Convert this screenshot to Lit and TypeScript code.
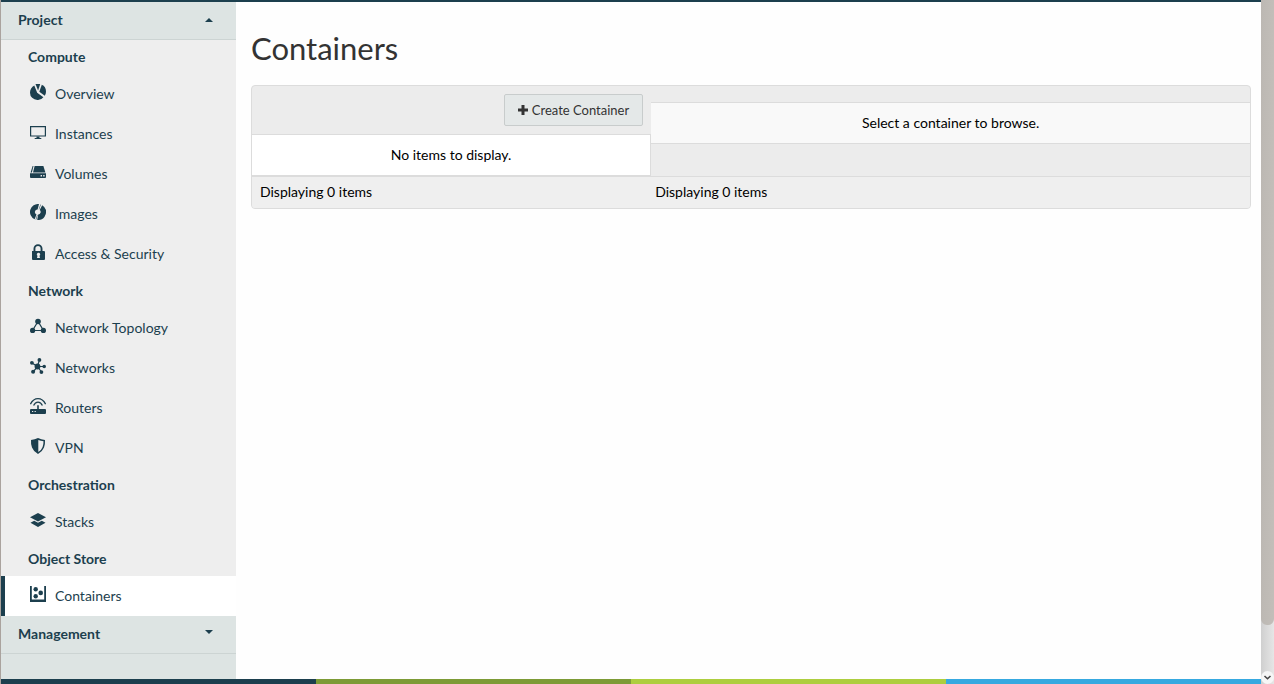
import { LitElement, html, css, svg, SVGTemplateResult } from "lit";
import { customElement, property, state } from "lit/decorators.js";
import { classMap } from "lit/directives/class-map.js";

const ICONS: Record<string, SVGTemplateResult> = {
  overview: svg`
    <path d="M4.300 1.600 7.200 8.800l6.200 4.400A7.300 7.300 0 0 1 7.300 16 7.300 7.300 0 0 1 0 8.700C0 5.600 1.600 3 4.300 1.600z"/>
    <path d="M5.500 0h4.700L8.100 6.400z"/>
    <path d="M11.800.8C14.500 2 16 4.400 16 7.200c0 1.700-.4 3.200-1.200 4.500L9.300 7.800z"/>`,
  instances: svg`
    <path fill-rule="evenodd" d="M0 2h16v10.600H0zM1.200 3.200v8.200h13.600V3.200z"/>
    <path d="M6.500 12.600h3v1.400h1.800v1H4.700v-1h1.800z"/>`,
  volumes: svg`
    <path d="M2.600 2h.9L1.900 8.600H.6z"/>
    <path d="M4.600 2h8.800l2 6.600H3z"/>
    <path fill-rule="evenodd" d="M0 9.300h16v3.800q0 .9-.9.900H.9Q0 14 0 13.100zM10.600 11v1.400H12V11zM13.200 11v1.400h1.400V11z"/>`,
  images: svg`
    <path d="M9 .06A8 8 0 0 0 4.600 15.240L6.500 10.400A2.600 2.600 0 0 1 7.600 5.400z"/>
    <path d="M12.200 1.190A8 8 0 0 1 7.200 15.960L8.200 10.600A2.600 2.600 0 0 0 9.700 6z"/>
    <path d="M10.500.4l.5.200-2 4.800-.3-.1zM6.100 15.700l-.5-.2 1.700-4.700.3.100z"/>`,
  lock: svg`
    <path fill-rule="evenodd" d="M2 7h1.500V4.700a4.500 4.500 0 0 1 9 0V7H14a1 1 0 0 1 1 1v7a1 1 0 0 1-1 1H3a1 1 0 0 1-1-1zM5.400 7h5.200V4.700a2.600 2.600 0 0 0-5.200 0zM8.500 8.800a1.600 1.600 0 0 0-1 2.900l-.5 2.300h3l-.5-2.300a1.600 1.600 0 0 0-1-2.900z"/>`,
  topology: svg`
    <path d="M8 3.500 2.500 12.500h11z" fill="none" stroke="currentColor" stroke-width="1.200"/>
    <circle cx="8" cy="3.500" r="2.800"/><circle cx="2.600" cy="12.400" r="2.600"/><circle cx="13.400" cy="12.400" r="2.600"/>`,
  networks: svg`
    <path d="M7.500 8.500 9.400 2M7.500 8.500 2 5M7.500 8.500h6.700M7.500 8.500l-4.300 5.300M7.500 8.500l4 5.500" fill="none" stroke="currentColor" stroke-width="1.200"/>
    <circle cx="7.500" cy="8.500" r="2.900"/><circle cx="9.400" cy="1.900" r="1.900"/><circle cx="1.900" cy="4.800" r="1.900"/>
    <circle cx="14.200" cy="8.500" r="1.800"/><circle cx="3.100" cy="13.800" r="2"/><circle cx="11.400" cy="14.100" r="1.900"/>`,
  routers: svg`
    <path d="M.4 6.200C2.200 2.600 4.800.7 8 .7s5.800 1.900 7.600 5.500M3.600 7.600C4.700 5.200 6.100 4.200 8 4.200s3.300 1 4.400 3.400" fill="none" stroke="currentColor" stroke-width="1.300"/>
    <path d="M7.200 7.200h1.600v3.900H7.200z"/>
    <path fill-rule="evenodd" d="M1 11h14q1 0 1 1v3q0 1-1 1H1q-1 0-1-1v-3q0-1 1-1zM2 13v1h1.200v-1zM4.600 13v1h1.200v-1z"/>`,
  vpn: svg`
    <path fill-rule="evenodd" d="M8 0q3.200 1.700 7 1.900.3 4.200-1 7.600Q12.300 13.800 8 16 3.700 13.800 2 9.500.7 6.100 1 1.900 4.800 1.700 8 0zM8.300 2v12q3.200-2 4.300-5.100 1-2.700.9-5.700Q10.800 3 8.300 2z"/>`,
  stacks: svg`
    <path d="M8 1l8 4.300-8 4.300-8-4.300z"/>
    <path d="M.5 10.800l3.700-2 3.800 2 3.800-2 3.700 2L8 15z"/>`,
  containers: svg`
    <path d="M0 0h1.800v13.600h12.400V0H16v16H0z"/>
    <circle cx="5.700" cy="3.200" r="2.200"/><circle cx="10.700" cy="6.900" r="2.300"/><circle cx="5.700" cy="10.300" r="2.200"/>`,
};

interface NavGroup {
  title: string;
  items: { icon: string; label: string }[];
}

const GROUPS: NavGroup[] = [
  {
    title: "Compute",
    items: [
      { icon: "overview", label: "Overview" },
      { icon: "instances", label: "Instances" },
      { icon: "volumes", label: "Volumes" },
      { icon: "images", label: "Images" },
      { icon: "lock", label: "Access & Security" },
    ],
  },
  {
    title: "Network",
    items: [
      { icon: "topology", label: "Network Topology" },
      { icon: "networks", label: "Networks" },
      { icon: "routers", label: "Routers" },
      { icon: "vpn", label: "VPN" },
    ],
  },
  { title: "Orchestration", items: [{ icon: "stacks", label: "Stacks" }] },
  { title: "Object Store", items: [{ icon: "containers", label: "Containers" }] },
];

@customElement("side-nav")
class SideNav extends LitElement {
  @property() active = "";
  @state() private open = true;

  static styles = css`
    :host {
      display: flex;
      flex-direction: column;
      background: #dde4e3;
      color: #1c3f4e;
      font-size: 14px;
      line-height: 20px;
    }
    .section {
      display: flex;
      align-items: center;
      justify-content: space-between;
      flex: none;
      height: 38px;
      padding: 0 23px 2px 17px;
      border: 0;
      border-bottom: 1px solid #ccd4d3;
      background: #dde4e3;
      color: inherit;
      font: inherit;
      font-weight: 700;
      text-align: left;
      cursor: pointer;
    }
    .caret {
      width: 8px;
      height: 4px;
      fill: currentColor;
    }
    .caret.down {
      margin-bottom: 4px;
    }
    .groups {
      background: #eeeeee;
    }
    .title {
      margin: 0;
      padding: 7px 27px;
      font-size: 14px;
      font-weight: 700;
    }
    ul {
      margin: 0;
      padding: 0;
      list-style: none;
    }
    .item {
      display: flex;
      align-items: center;
      gap: 9px;
      height: 40px;
      box-sizing: border-box;
      padding: 0 16px 0 25px;
      border-left: 4px solid transparent;
      color: inherit;
      text-decoration: none;
    }
    .item.active {
      background: #fff;
      border-left-color: #1c3f4e;
    }
    .icon {
      width: 16px;
      height: 16px;
      margin-bottom: 4px;
      fill: currentColor;
    }
  `;

  render() {
    return html`
      <button class="section" aria-expanded=${this.open} @click=${() => (this.open = !this.open)}>
        Project
        <svg class="caret" viewBox="0 0 8 4" aria-hidden="true"><path d="M4 0l4 4H0z" /></svg>
      </button>
      ${this.open
        ? html`<nav class="groups" aria-label="Project">
            ${GROUPS.map(
              (g) => html`
                <h2 class="title">${g.title}</h2>
                <ul>
                  ${g.items.map(
                    (i) => html`<li>
                      <a href="#" class=${classMap({ item: true, active: i.label === this.active })}>
                        <svg class="icon" viewBox="0 0 16 16" aria-hidden="true">${ICONS[i.icon]}</svg>
                        <span>${i.label}</span>
                      </a>
                    </li>`
                  )}
                </ul>
              `
            )}
          </nav>`
        : ""}
      <button class="section" aria-expanded="false">
        Management
        <svg class="caret down" viewBox="0 0 8 4" aria-hidden="true"><path d="M0 0h8L4 4z" /></svg>
      </button>
    `;
  }
}

@customElement("container-browser")
class ContainerBrowser extends LitElement {
  static styles = css`
    :host {
      display: block;
      overflow: hidden;
      border: 1px solid #dcdcdc;
      border-radius: 4px;
      background: #ececec;
      color: #000;
      font-size: 14px;
      line-height: 20px;
    }
    .columns {
      display: grid;
      grid-template-columns: 2fr 3fr;
      align-items: start;
    }
    .toolbar {
      display: flex;
      justify-content: flex-end;
      padding: 8px;
    }
    .create {
      display: flex;
      align-items: center;
      gap: 4px;
      height: 32px;
      padding: 0 13px;
      border: 1px solid #c8cccc;
      border-radius: 2px;
      background: #e4e8e8;
      color: #333;
      font: inherit;
      font-size: 13px;
      cursor: pointer;
    }
    .plus {
      width: 10px;
      height: 10px;
      fill: currentColor;
    }
    table {
      width: 100%;
      border-spacing: 0;
    }
    td {
      padding: 10px 8px;
      border: solid #dcdcdc;
      border-width: 1px 0;
      text-align: center;
    }
    .containers td {
      border-right-width: 1px;
      background: #fff;
    }
    .objects {
      padding-top: 16px;
    }
    .objects td {
      background: #f9f9f9;
    }
    .footer {
      border-top: 1px solid #dcdcdc;
      background: #efefef;
    }
    .count {
      padding: 5px 8px 6px;
    }
    .count.second {
      padding-left: 4px;
    }
  `;

  render() {
    return html`
      <div class="columns">
        <div class="containers">
          <div class="toolbar">
            <button class="create">
              <svg class="plus" viewBox="0 0 10 10" aria-hidden="true">
                <path d="M3.500 0h3v3.500H10v3H6.500V10h-3V6.500H0v-3h3.500z" />
              </svg>
              Create Container
            </button>
          </div>
          <table aria-label="Containers"><tbody><tr><td>No items to display.</td></tr></tbody></table>
        </div>
        <div class="objects">
          <table aria-label="Objects"><tbody><tr><td>Select a container to browse.</td></tr></tbody></table>
        </div>
      </div>
      <div class="columns footer">
        <div class="count">Displaying 0 items</div>
        <div class="count second">Displaying 0 items</div>
      </div>
    `;
  }
}

@customElement("app-root")
class AppRoot extends LitElement {
  static styles = css`
    :host {
      display: flex;
      height: 100vh;
      overflow: hidden;
      background: #fefefe;
      font-family: Lato, "Liberation Sans", sans-serif;
    }
    .page {
      flex: 1;
      min-width: 0;
      display: flex;
      flex-direction: column;
      border-left: 1px solid #aaa39e;
    }
    .body {
      flex: 1;
      min-height: 0;
      display: flex;
      overflow: hidden;
      border-top: 2px solid #1c3f4e;
    }
    side-nav {
      flex: 0 0 235px;
    }
    main {
      flex: 1;
      min-width: 0;
      padding: 27px 10px 0 15px;
    }
    h1 {
      margin: 0 0 18px;
      color: #333;
      font-size: 31px;
      line-height: 38px;
      font-weight: 400;
    }
    .stripe {
      display: grid;
      grid-template-columns: repeat(4, 1fr);
      height: 5px;
    }
    .navy { background: #1c3f4e; }
    .olive { background: #7d9b36; }
    .lime { background: #adce3f; }
    .sky { background: #36a9e0; }
    .scroll {
      flex: 0 0 13px;
      display: flex;
      flex-direction: column;
      justify-content: space-between;
      background: linear-gradient(90deg, #cfcfcf, #e6e6e6);
    }
    .thumb {
      flex: 1;
      margin-bottom: 46px;
      border-radius: 0 0 6px 6px;
      background: linear-gradient(90deg, #bcb8b3, #c2beb9);
    }
    .down {
      width: 13px;
      height: 13px;
      border-radius: 50%;
      background: #f6f6f6;
    }
  `;

  render() {
    return html`
      <div class="page">
        <div class="body">
          <side-nav active="Containers"></side-nav>
          <main>
            <h1>Containers</h1>
            <container-browser></container-browser>
          </main>
        </div>
        <div class="stripe">
          <div class="navy"></div>
          <div class="olive"></div>
          <div class="lime"></div>
          <div class="sky"></div>
        </div>
      </div>
      <div class="scroll" aria-hidden="true">
        <div class="thumb"></div>
        <svg class="down" viewBox="0 0 13 13">
          <path d="M3.500 5l3 2.800 3-2.800" fill="none" stroke="#444" stroke-width="1.500" />
        </svg>
      </div>
    `;
  }
}
